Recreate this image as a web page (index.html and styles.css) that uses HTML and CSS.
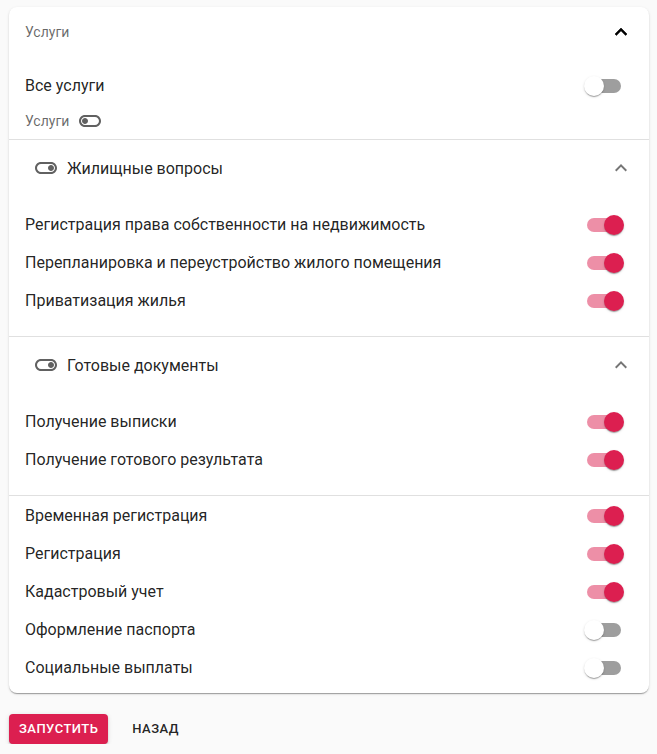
FILE: index.html
```html
<!DOCTYPE html>
<html lang="ru">
<head>
    <meta charset="UTF-8">
    <meta name="viewport" content="width=device-width, initial-scale=1.0">
    <title>Услуги</title>
    <link rel="stylesheet" href="styles.css">
</head>
<body>
    <div class="card">
        <!-- Outer accordion header -->
        <div class="summary">
            <span class="summary-title">Услуги</span>
            <svg class="chevron chevron-dark" viewBox="0 0 24 24"><path d="M12 8l-6 6 1.41 1.41L12 10.83l4.59 4.58L18 14z"/></svg>
        </div>
        <div class="details">
            <div class="row">
                <span class="row-label">Все услуги</span>
                <span class="switch"><span class="track"></span><span class="thumb"></span></span>
            </div>
            <div class="sub-label">
                <span>Услуги</span>
                <svg class="toggle-icon" viewBox="0 0 24 24"><path d="M17 6H7c-3.31 0-6 2.69-6 6s2.69 6 6 6h10c3.31 0 6-2.69 6-6s-2.69-6-6-6zm0 10H7c-2.21 0-4-1.790-4-4s1.79-4 4-4h10c2.21 0 4 1.79 4 4s-1.79 4-4 4zM7 9c-1.66 0-3 1.34-3 3s1.34 3 3 3 3-1.34 3-3-1.34-3-3-3z"/></svg>
            </div>
        </div>

        <!-- Group: housing -->
        <div class="section">
            <div class="section-summary">
                <div class="section-title">
                    <svg class="toggle-icon" viewBox="0 0 24 24"><path d="M17 6H7c-3.31 0-6 2.69-6 6s2.69 6 6 6h10c3.31 0 6-2.69 6-6s-2.69-6-6-6zm0 10H7c-2.21 0-4-1.79-4-4s1.79-4 4-4h10c2.21 0 4 1.79 4 4s-1.79 4-4 4zm0-7c-1.66 0-3 1.34-3 3s1.34 3 3 3 3-1.34 3-3-1.34-3-3-3z"/></svg>
                    <span>Жилищные вопросы</span>
                </div>
                <svg class="chevron" viewBox="0 0 24 24"><path d="M12 8l-6 6 1.41 1.41L12 10.83l4.59 4.58L18 14z"/></svg>
            </div>
            <div class="section-body">
                <div class="row">
                    <span class="row-label">Регистрация права собственности на недвижимость</span>
                    <span class="switch on"><span class="track"></span><span class="thumb"></span></span>
                </div>
                <div class="row">
                    <span class="row-label">Перепланировка и переустройство жилого помещения</span>
                    <span class="switch on"><span class="track"></span><span class="thumb"></span></span>
                </div>
                <div class="row">
                    <span class="row-label">Приватизация жилья</span>
                    <span class="switch on"><span class="track"></span><span class="thumb"></span></span>
                </div>
            </div>
        </div>

        <!-- Group: documents -->
        <div class="section">
            <div class="section-summary">
                <div class="section-title">
                    <svg class="toggle-icon" viewBox="0 0 24 24"><path d="M17 6H7c-3.31 0-6 2.69-6 6s2.69 6 6 6h10c3.31 0 6-2.690 6-6s-2.69-6-6-6zm0 10H7c-2.21 0-4-1.79-4-4s1.79-4 4-4h10c2.21 0 4 1.79 4 4s-1.79 4-4 4zm0-7c-1.66 0-3 1.34-3 3s1.34 3 3 3 3-1.34 3-3-1.34-3-3-3z"/></svg>
                    <span>Готовые документы</span>
                </div>
                <svg class="chevron" viewBox="0 0 24 24"><path d="M12 8l-6 6 1.41 1.41L12 10.83l4.59 4.58L18 14z"/></svg>
            </div>
            <div class="section-body">
                <div class="row">
                    <span class="row-label">Получение выписки</span>
                    <span class="switch on"><span class="track"></span><span class="thumb"></span></span>
                </div>
                <div class="row">
                    <span class="row-label">Получение готового результата</span>
                    <span class="switch on"><span class="track"></span><span class="thumb"></span></span>
                </div>
            </div>
        </div>

        <!-- Ungrouped services -->
        <div class="section plain">
            <div class="row">
                <span class="row-label">Временная регистрация</span>
                <span class="switch on"><span class="track"></span><span class="thumb"></span></span>
            </div>
            <div class="row">
                <span class="row-label">Регистрация</span>
                <span class="switch on"><span class="track"></span><span class="thumb"></span></span>
            </div>
            <div class="row">
                <span class="row-label">Кадастровый учет</span>
                <span class="switch on"><span class="track"></span><span class="thumb"></span></span>
            </div>
            <div class="row">
                <span class="row-label">Оформление паспорта</span>
                <span class="switch"><span class="track"></span><span class="thumb"></span></span>
            </div>
            <div class="row">
                <span class="row-label">Социальные выплаты</span>
                <span class="switch"><span class="track"></span><span class="thumb"></span></span>
            </div>
        </div>
    </div>

    <div class="actions">
        <button class="btn btn-primary">Запустить</button>
        <button class="btn btn-text">Назад</button>
    </div>
</body>
</html>
```

FILE: styles.css
```css
/* General */
body, html {
    margin: 0;
    padding: 0;
}

body {
    font-family: Roboto, "Noto Sans", Arial, sans-serif;
    background-color: #fafafa;
    color: rgba(0, 0, 0, 0.87);
    padding: 7px 8px 0 9px;
}

/* Card */
.card {
    width: 640px;
    background-color: #fff;
    border-radius: 8px;
    box-shadow: 0 2px 1px -1px rgba(0, 0, 0, 0.2), 0 1px 1px 0 rgba(0, 0, 0, 0.14), 0 1px 3px 0 rgba(0, 0, 0, 0.12);
}

.summary {
    height: 50px;
    padding: 0 16px;
    display: flex;
    align-items: center;
    justify-content: space-between;
}

.summary-title {
    font-size: 14px;
    color: rgba(0, 0, 0, 0.6);
}

.chevron {
    width: 24px;
    height: 24px;
    fill: rgba(0, 0, 0, 0.54);
}

.chevron-dark {
    fill: #000;
    stroke: #000;
    stroke-width: 0.6;
}

.details {
    padding: 10px 16px 6px;
}

.sub-label {
    margin-top: 4px;
    height: 24px;
    display: flex;
    align-items: center;
    gap: 9px;
    font-size: 14px;
    color: rgba(0, 0, 0, 0.6);
}

.toggle-icon {
    width: 24px;
    height: 24px;
    fill: #616161;
}

/* Sections */
.section {
    border-top: 1px solid #e0e0e0;
}

.section-summary {
    height: 56px;
    padding: 0 16px 0 25px;
    display: flex;
    align-items: center;
    justify-content: space-between;
}

.section-title {
    display: flex;
    align-items: center;
    gap: 9px;
    font-size: 16px;
}

.section-body {
    padding: 10px 16px 16px;
}

.section.plain {
    padding: 1px 16px 6px;
}

/* Rows */
.row {
    height: 38px;
    display: flex;
    align-items: center;
    justify-content: space-between;
}

.row-label {
    font-size: 16px;
    line-height: 1.5;
}

/* Switch */
.switch {
    position: relative;
    width: 58px;
    height: 38px;
    flex-shrink: 0;
}

.switch .track {
    display: block;
    margin: 12px;
    width: 34px;
    height: 14px;
    border-radius: 7px;
    background-color: #000;
    opacity: 0.38;
}

.switch .thumb {
    position: absolute;
    top: 9px;
    left: 9px;
    width: 20px;
    height: 20px;
    border-radius: 50%;
    background-color: #fff;
    box-shadow: 0 2px 1px -1px rgba(0, 0, 0, 0.2), 0 1px 1px 0 rgba(0, 0, 0, 0.14), 0 1px 3px 0 rgba(0, 0, 0, 0.12);
}

.switch.on .track {
    background-color: #dc1f50;
    opacity: 0.5;
}

.switch.on .thumb {
    left: 29px;
    background-color: #dc1f50;
}

/* Buttons */
.actions {
    margin-top: 21px;
    display: flex;
    gap: 19px;
}

.btn {
    font-family: Roboto, "Noto Sans", Arial, sans-serif;
    font-size: 13px;
    font-weight: 500;
    line-height: 22px;
    letter-spacing: 0.46px;
    text-transform: uppercase;
    border: none;
    border-radius: 4px;
    cursor: pointer;
}

.btn-primary {
    background-color: #dc1f50;
    color: #fff;
    padding: 4px 10px;
    box-shadow: 0 3px 1px -2px rgba(0, 0, 0, 0.2), 0 2px 2px 0 rgba(0, 0, 0, 0.14), 0 1px 5px 0 rgba(0, 0, 0, 0.12);
}

.btn-text {
    background: none;
    color: rgba(0, 0, 0, 0.87);
    padding: 4px 5px;
}
```
